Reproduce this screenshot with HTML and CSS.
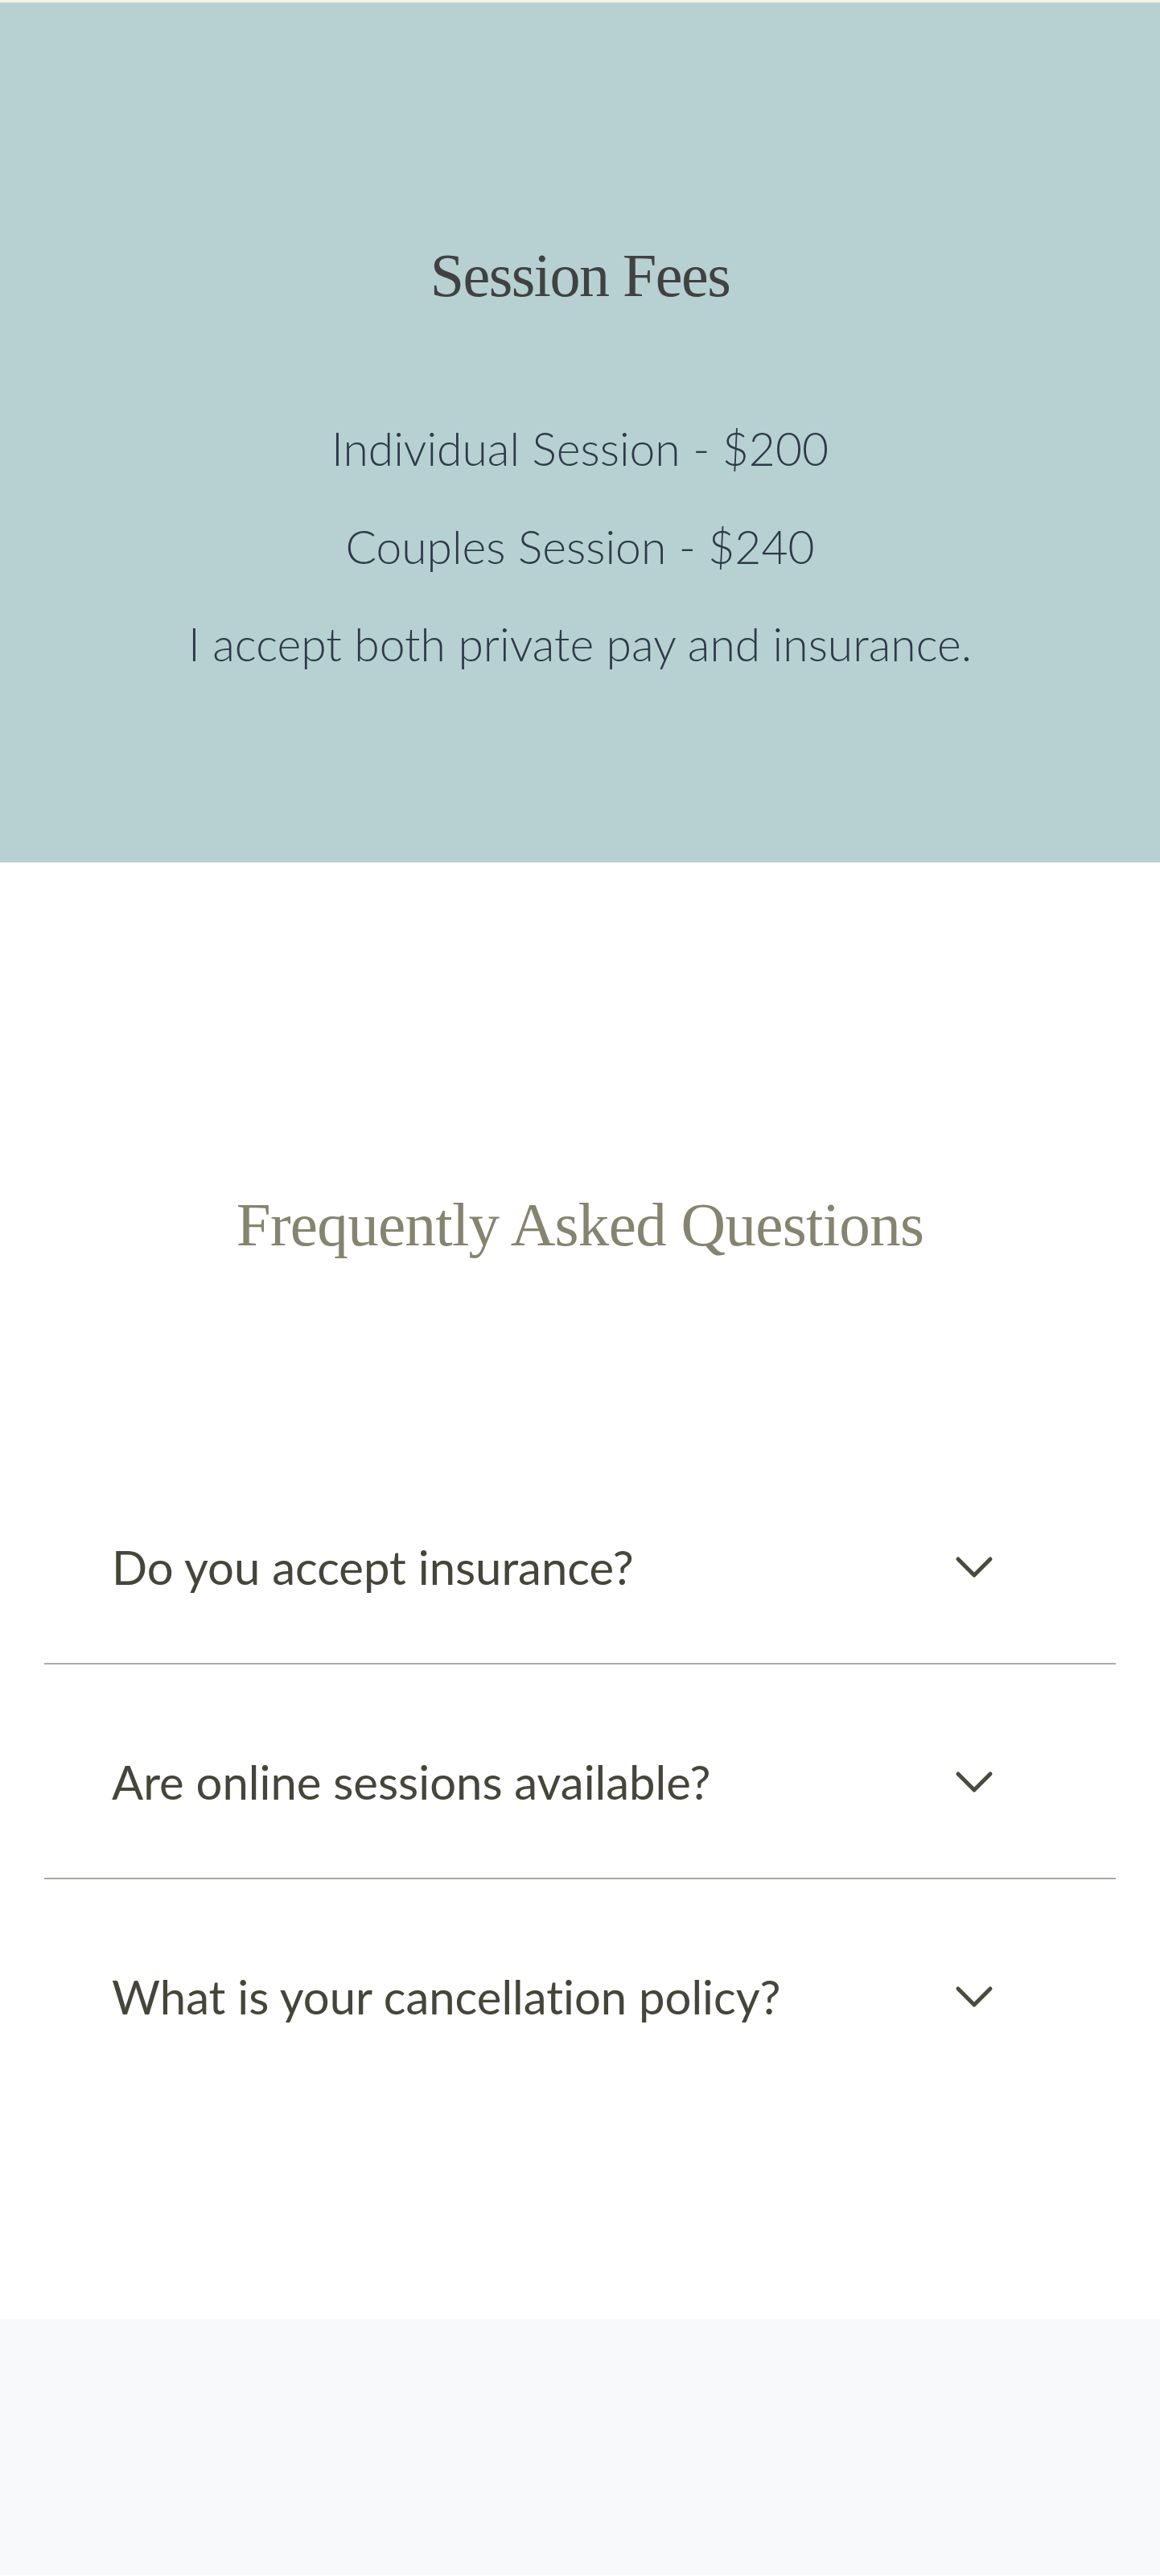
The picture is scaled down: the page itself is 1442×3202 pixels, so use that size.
FILE: index.html
```html
<!DOCTYPE html>
<html lang="en">
<head>
<meta charset="utf-8">
<title>Session Fees</title>
<link rel="stylesheet" href="styles.css">
</head>
<body>
<div class="topbar"></div>
<section class="fees">
  <h2 class="fees-title">Session Fees</h2>
  <div class="fees-list">
    <p class="fee">Individual Session - $200</p>
    <p class="fee">Couples Session - $240</p>
    <p class="fee">I accept both private pay and insurance.</p>
  </div>
</section>
<section class="faq">
  <h2 class="faq-title">Frequently Asked Questions</h2>
  <div class="faq-list">
    <div class="faq-item">
      <span class="faq-q">Do you accept insurance?</span>
      <svg class="chev" viewBox="0 0 48 28" width="48" height="28"><polyline points="4,4 24,24 44,4"/></svg>
    </div>
    <div class="faq-item">
      <span class="faq-q">Are online sessions available?</span>
      <svg class="chev" viewBox="0 0 48 28" width="48" height="28"><polyline points="4,4 24,24 44,4"/></svg>
    </div>
    <div class="faq-item">
      <span class="faq-q">What is your cancellation policy?</span>
      <svg class="chev" viewBox="0 0 48 28" width="48" height="28"><polyline points="4,4 24,24 44,4"/></svg>
    </div>
  </div>
</section>
<footer class="footer"></footer>
</body>
</html>
```

FILE: styles.css
```css
html, body {
  margin: 0;
  padding: 0;
  background: #ffffff;
}

.topbar {
  height: 3px;
  background: #f4f2ea;
  border-bottom: 1px solid #cdd3ce;
}

.fees {
  background: #b7d1d2;
  padding: 288px 0 236px;
  text-align: center;
}

.fees-title {
  margin: 0;
  font-family: "Liberation Serif", "Times New Roman", serif;
  font-weight: 400;
  font-size: 76px;
  line-height: 100px;
  letter-spacing: -1.5px;
  color: #414141;
}

.fees-list {
  margin-top: 129px;
  display: flex;
  flex-direction: column;
  gap: 49.5px;
}

.fee {
  margin: 0;
  font-family: "Lato", "Open Sans", sans-serif;
  font-weight: 300;
  font-size: 57px;
  line-height: 72px;
  color: #2e3949;
  font-variant-ligatures: none;
}

.faq {
  padding: 400px 55px 282px;
}

.faq-title {
  margin: 0;
  text-align: center;
  font-family: "Liberation Serif", "Times New Roman", serif;
  font-weight: 400;
  font-size: 77px;
  line-height: 100px;
  letter-spacing: -0.7px;
  color: #85846f;
}

.faq-list {
  margin-top: 230px;
}

.faq-item {
  display: flex;
  align-items: center;
  justify-content: space-between;
  padding: 116px 152px 89px 84px;
  border-bottom: 2px solid #a9a9a3;
}

.faq-item:last-child {
  border-bottom: none;
}

.faq-q {
  font-family: "Lato", "Open Sans", sans-serif;
  font-weight: 400;
  font-size: 58px;
  line-height: 60px;
  color: #45453a;
  font-variant-ligatures: none;
}

.chev {
  display: block;
  flex: none;
}

.chev polyline {
  fill: none;
  stroke: #4a4a3d;
  stroke-width: 5;
  stroke-linecap: round;
  stroke-linejoin: round;
}

.footer {
  height: 318px;
  background: #f8f9fb;
}
```
